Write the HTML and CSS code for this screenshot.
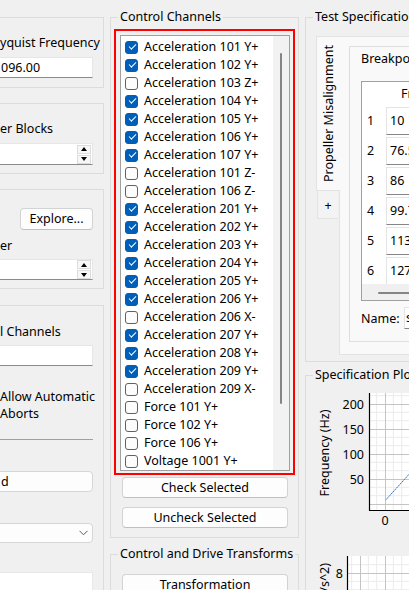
FILE: index.html
```html
<!DOCTYPE html>
<html>
<head>
<meta charset="utf-8">
<link rel="stylesheet" href="styles.css">
</head>
<body>
<div class="app">
  <div class="col-left">
    <div class="lgroup g1">
      <div class="lbl">yquist Frequency</div>
      <div class="edit">096.00</div>
    </div>
    <div class="lgroup g2">
      <div class="lbl">er Blocks</div>
      <div class="spin h22"><span class="spin-val"></span><span class="spin-btns"><span class="sb"><span class="tri-up"></span></span><span class="sb"><span class="tri-dn"></span></span></span></div>
    </div>
    <div class="lgroup g3">
      <button class="btn explore">Explore...</button>
      <div class="lbl lbl-er">er</div>
      <div class="spin h21"><span class="spin-val"></span><span class="spin-btns"><span class="sb"><span class="tri-up"></span></span><span class="sb"><span class="tri-dn"></span></span></span></div>
    </div>
    <div class="lgroup g4">
      <div class="lbl">l Channels</div>
      <div class="edit edit-ch"></div>
      <div class="chk-text">Allow Automatic<br>Aborts</div>
      <div class="sep"></div>
      <div class="field">d</div>
      <div class="combo"><svg class="chev" width="9" height="6" viewBox="0 0 9 6"><polyline points="0.5,0.8 4.5,4.8 8.5,0.8" fill="none" stroke="#5c5c5c" stroke-width="1"/></svg></div>
      <div class="whitebox"></div>
    </div>
  </div>

  <div class="col-mid">
    <fieldset class="group">
      <legend>Control Channels</legend>
      <div class="gbody cc">
        <div class="hilite">
          <div class="list">
            <div class="items">
              <div class="item"><span class="cb on"></span><span class="itxt">Acceleration 101 Y+</span></div>
              <div class="item"><span class="cb on"></span><span class="itxt">Acceleration 102 Y+</span></div>
              <div class="item"><span class="cb"></span><span class="itxt">Acceleration 103 Z+</span></div>
              <div class="item"><span class="cb on"></span><span class="itxt">Acceleration 104 Y+</span></div>
              <div class="item"><span class="cb on"></span><span class="itxt">Acceleration 105 Y+</span></div>
              <div class="item"><span class="cb on"></span><span class="itxt">Acceleration 106 Y+</span></div>
              <div class="item"><span class="cb on"></span><span class="itxt">Acceleration 107 Y+</span></div>
              <div class="item"><span class="cb"></span><span class="itxt">Acceleration 101 Z-</span></div>
              <div class="item"><span class="cb"></span><span class="itxt">Acceleration 106 Z-</span></div>
              <div class="item"><span class="cb on"></span><span class="itxt">Acceleration 201 Y+</span></div>
              <div class="item"><span class="cb on"></span><span class="itxt">Acceleration 202 Y+</span></div>
              <div class="item"><span class="cb on"></span><span class="itxt">Acceleration 203 Y+</span></div>
              <div class="item"><span class="cb on"></span><span class="itxt">Acceleration 204 Y+</span></div>
              <div class="item"><span class="cb on"></span><span class="itxt">Acceleration 205 Y+</span></div>
              <div class="item"><span class="cb on"></span><span class="itxt">Acceleration 206 Y+</span></div>
              <div class="item"><span class="cb"></span><span class="itxt">Acceleration 206 X-</span></div>
              <div class="item"><span class="cb on"></span><span class="itxt">Acceleration 207 Y+</span></div>
              <div class="item"><span class="cb on"></span><span class="itxt">Acceleration 208 Y+</span></div>
              <div class="item"><span class="cb on"></span><span class="itxt">Acceleration 209 Y+</span></div>
              <div class="item"><span class="cb"></span><span class="itxt">Acceleration 209 X-</span></div>
              <div class="item"><span class="cb"></span><span class="itxt">Force 101 Y+</span></div>
              <div class="item"><span class="cb"></span><span class="itxt">Force 102 Y+</span></div>
              <div class="item"><span class="cb"></span><span class="itxt">Force 106 Y+</span></div>
              <div class="item"><span class="cb"></span><span class="itxt">Voltage 1001 Y+</span></div>
            </div>
            <div class="vscroll"><div class="vthumb"></div></div>
          </div>
        </div>
        <button class="btn wide first">Check Selected</button>
        <button class="btn wide second">Uncheck Selected</button>
      </div>
    </fieldset>
    <fieldset class="group cdt">
      <legend>Control and Drive Transforms</legend>
      <div class="gbody cdt-body">
        <button class="btn wide">Transformation</button>
      </div>
    </fieldset>
  </div>

  <div class="col-right">
    <fieldset class="group">
      <legend>Test Specification</legend>
      <div class="gbody ts">
        <div class="tabw">
          <div class="tabbar">
            <div class="tab sel"><span class="vtext">Propeller Misalignment</span></div>
            <div class="tab add">+</div>
          </div>
          <div class="pane">
            <div class="frame">
              <div class="flabel">Breakpoints</div>
              <div class="table">
                <div class="thead"><div class="corner"></div><div class="hcell">Frequency (Hz)</div></div>
                <div class="tbody">
                  <div class="trow"><div class="vh">1</div><div class="cell">10</div></div>
                  <div class="trow"><div class="vh">2</div><div class="cell">76.5</div></div>
                  <div class="trow"><div class="vh">3</div><div class="cell">86</div></div>
                  <div class="trow"><div class="vh">4</div><div class="cell">99.7</div></div>
                  <div class="trow"><div class="vh">5</div><div class="cell">113</div></div>
                  <div class="trow"><div class="vh">6</div><div class="cell">127</div></div>
                </div>
                <div class="hscroll"><div class="hthumb"></div></div>
              </div>
              <div class="namerow"><span class="nlabel">Name:</span><span class="nedit">sample</span></div>
            </div>
          </div>
        </div>
      </div>
    </fieldset>
    <fieldset class="group sp">
      <legend>Specification Plot</legend>
      <svg class="plot" width="110" height="210" viewBox="0 0 110 210">
        <rect x="63" y="9" width="47" height="117" fill="#ffffff"/>
        <g stroke="#ebebeb" stroke-width="1">
          <line x1="63" y1="11.67" x2="110" y2="11.67"/>
          <line x1="63" y1="28.33" x2="110" y2="28.33"/>
          <line x1="63" y1="36.67" x2="110" y2="36.67"/>
          <line x1="63" y1="53.33" x2="110" y2="53.33"/>
          <line x1="63" y1="61.67" x2="110" y2="61.67"/>
          <line x1="63" y1="78.33" x2="110" y2="78.33"/>
          <line x1="63" y1="86.67" x2="110" y2="86.67"/>
          <line x1="63" y1="103.33" x2="110" y2="103.33"/>
          <line x1="63" y1="111.67" x2="110" y2="111.67"/>
          <line x1="70.67" y1="9" x2="70.67" y2="126"/>
          <line x1="87.33" y1="9" x2="87.33" y2="126"/>
          <line x1="95.67" y1="9" x2="95.67" y2="126"/>
        </g>
        <g stroke="#c4c4c4" stroke-width="1">
          <line x1="63" y1="20.5" x2="110" y2="20.5"/>
          <line x1="63" y1="45.5" x2="110" y2="45.5"/>
          <line x1="63" y1="70.5" x2="110" y2="70.5"/>
          <line x1="63" y1="95.5" x2="110" y2="95.5"/>
          <line x1="63" y1="120.5" x2="110" y2="120.5"/>
          <line x1="79.5" y1="9" x2="79.5" y2="126"/>
          <line x1="104.5" y1="9" x2="104.5" y2="126"/>
        </g>
        <polyline points="80,115.7 103,90.3 110,82.6" fill="none" stroke="#2f6fd0" stroke-width="1" stroke-dasharray="2 0.6"/>
        <g stroke="#000" stroke-width="1.2">
          <line x1="63.5" y1="9" x2="63.5" y2="126.5"/>
          <line x1="63" y1="126.5" x2="110" y2="126.5"/>
        </g>
        <g class="tick" text-anchor="end">
          <text x="58" y="20" dominant-baseline="central">200</text>
          <text x="58" y="45" dominant-baseline="central">150</text>
          <text x="58" y="70" dominant-baseline="central">100</text>
          <text x="58" y="95" dominant-baseline="central">50</text>
        </g>
        <text class="tick" x="79" y="136" text-anchor="middle" dominant-baseline="central">0</text>
        <text class="axlabel" transform="translate(18,69) rotate(-90)" text-anchor="middle" dominant-baseline="central">Frequency (Hz)</text>

        <rect x="41" y="172" width="69" height="40" fill="#ffffff"/>
        <g stroke="#ebebeb" stroke-width="1">
          <line x1="41" y1="180.67" x2="110" y2="180.67"/>
          <line x1="41" y1="197.33" x2="110" y2="197.33"/>
          <line x1="41" y1="205.67" x2="110" y2="205.67"/>
          <line x1="45.67" y1="172" x2="45.67" y2="210"/>
          <line x1="62.33" y1="172" x2="62.33" y2="210"/>
          <line x1="70.67" y1="172" x2="70.67" y2="210"/>
          <line x1="87.33" y1="172" x2="87.33" y2="210"/>
          <line x1="95.67" y1="172" x2="95.67" y2="210"/>
        </g>
        <g stroke="#c4c4c4" stroke-width="1">
          <line x1="41" y1="189.5" x2="110" y2="189.5"/>
          <line x1="54.5" y1="172" x2="54.5" y2="210"/>
          <line x1="79.5" y1="172" x2="79.5" y2="210"/>
          <line x1="104.5" y1="172" x2="104.5" y2="210"/>
        </g>
        <line x1="41.5" y1="172" x2="41.5" y2="210" stroke="#000" stroke-width="1.2"/>
        <text class="tick" x="37" y="189" text-anchor="end" dominant-baseline="central">8</text>
        <text class="axlabel" transform="translate(18,179) rotate(-90)" text-anchor="end" dominant-baseline="central">Acceleration (m/s^2)</text>
      </svg>
    </fieldset>
  </div>
</div>
</body>
</html>
```

FILE: styles.css
```css
* { box-sizing: border-box; }
html, body { margin: 0; padding: 0; }
body {
  width: 409px;
  height: 590px;
  overflow: hidden;
  background: #f0f0f0;
  font-family: "Noto Sans", "Open Sans", sans-serif;
  font-size: 12.5px;
  color: #000;
}
.app { display: flex; align-items: flex-start; }

/* ---------- left column ---------- */
.col-left {
  flex: 0 0 121px;
  width: 121px;
  margin-left: -17px;
  padding-top: 17px;
}
.lgroup {
  border: 1px solid #dcdcdc;
  display: flex;
  flex-direction: column;
  padding: 0 10px 0 12px;
  margin-top: 15px;
}
.lgroup > * { flex-shrink: 0; }
.g1 { margin-top: 0; padding-top: 16px; padding-bottom: 9px; }
.g2 { padding-top: 16px; padding-bottom: 8px; }
.g3 { padding-top: 18px; padding-bottom: 8px; }
.g4 { margin-top: 16px; padding-top: 17px; height: 330px; }
.lbl { line-height: 18px; height: 18px; padding-left: 4px; white-space: nowrap; }
.lbl-er { margin-top: 7px; }
.edit {
  margin-top: 5px;
  height: 21px;
  background: #fff;
  border: 1px solid #e6e6e6;
  border-bottom-color: #8a8a8a;
  padding-left: 4px;
  line-height: 19px;
}
.edit-ch { margin-top: 4px; }
.spin {
  display: flex;
  background: #fff;
  border: 1px solid #e6e6e6;
  border-bottom-color: #8a8a8a;
}
.spin.h22 { margin-top: 5px; height: 22px; }
.spin.h21 { margin-top: 4px; height: 21px; }
.spin-val { flex: 1; }
.spin-btns { display: flex; flex-direction: column; justify-content: center; gap: 1px; padding-right: 1px; }
.sb {
  width: 14px;
  height: 9px;
  border: 1px solid #dcdcdc;
  background: #f7f7f7;
  display: flex;
  align-items: center;
  justify-content: center;
}
.tri-up { width: 0; height: 0; border-left: 3px solid transparent; border-right: 3px solid transparent; border-bottom: 4px solid #000; }
.tri-dn { width: 0; height: 0; border-left: 3px solid transparent; border-right: 3px solid transparent; border-top: 4px solid #000; }
.btn {
  font: inherit;
  color: #000;
  background: #fdfdfd;
  border: 1px solid #d3d3d3;
  border-bottom-color: #c0c0c0;
  border-radius: 4px;
  padding: 0;
  margin: 0;
  display: block;
  text-align: center;
}
.explore { align-self: flex-end; width: 73px; height: 22px; line-height: 20px; }
.chk-text { margin-top: 22px; line-height: 17px; padding-left: 4px; white-space: nowrap; }
.sep { margin-top: 17px; height: 1px; background: #a0a0a0; }
.field {
  margin-top: 31px;
  height: 21px;
  background: #fdfdfd;
  border: 1px solid #d6d6d6;
  border-radius: 4px;
  padding-left: 4px;
  line-height: 19px;
}
.combo {
  margin-top: 31px;
  height: 20px;
  background: #fdfdfd;
  border: 1px solid #d6d6d6;
  border-radius: 4px;
  display: flex;
  align-items: center;
  justify-content: flex-end;
  padding-right: 4px;
}
.chev { display: block; }
.whitebox { margin-top: 29px; height: 60px; background: #fff; border: 1px solid #e8e8e8; }

/* ---------- group boxes ---------- */
fieldset.group {
  margin: 0;
  padding: 0;
  min-width: 0;
  border: 1px solid #dcdcdc;
}
fieldset.group legend {
  padding: 0 2px;
  margin-left: 7px;
  line-height: 18px;
  height: 18px;
  white-space: nowrap;
}

/* ---------- middle column ---------- */
.col-mid {
  flex: 0 0 189px;
  width: 189px;
  margin-left: 6px;
  padding-top: 8px;
}
.gbody.cc { padding: 3px 3px 9px 3px; }
.hilite {
  border: 2px solid #ff0000;
  padding: 4px 3px 2px 4px;
}
.list {
  display: flex;
  border: 1px solid #a0a0a0;
  background: #fff;
}
.items { flex: 1; padding-top: 2px; background: #fff; }
.item { display: flex; align-items: center; height: 18px; }
.cb {
  flex: 0 0 13px;
  width: 13px;
  height: 13px;
  margin-left: 4px;
  border: 1px solid #616161;
  border-radius: 3px;
  background: #fcfcfc;
  position: relative;
}
.cb.on { background: #005fb8; border-color: #005fb8; }
.cb.on::after {
  content: "";
  position: absolute;
  left: 2.8px;
  top: 2.6px;
  width: 5.5px;
  height: 2.8px;
  border-left: 1.1px solid #fff;
  border-bottom: 1.1px solid #fff;
  transform: rotate(-45deg);
}
.itxt { margin-left: 6px; line-height: 18px; white-space: nowrap; }
.vscroll {
  flex: 0 0 16px;
  width: 16px;
  background: #f2f2f2;
  padding-top: 17px;
  display: flex;
  justify-content: center;
}
.vthumb { width: 2px; height: 351px; background: #858585; border-radius: 1px; }
.btn.wide { width: 166px; height: 21px; line-height: 19px; margin-left: 8px; }
.btn.first { margin-top: 2px; }
.btn.second { margin-top: 9px; }
fieldset.cdt { margin-top: 7px; }
.gbody.cdt-body { padding: 11px 3px 20px 3px; }

/* ---------- right column ---------- */
.col-right {
  flex: 0 0 230px;
  width: 230px;
  margin-left: 6px;
  padding-top: 8px;
}
.gbody.ts { padding: 10px 0 6px 10px; }
.tabw { display: flex; align-items: flex-start; }
.tabbar { display: flex; flex-direction: column; width: 23px; flex: 0 0 23px; }
.tab.sel {
  position: relative;
  z-index: 1;
  width: 24px;
  margin-right: -1px;
  height: 155px;
  flex: 0 0 155px;
  background: #f9f9f9;
  border: 1px solid #e3e3e3;
  border-right: none;
  display: flex;
  align-items: center;
  justify-content: center;
}
.vtext {
  writing-mode: vertical-rl;
  transform: rotate(180deg);
  white-space: nowrap;
  line-height: 18px;
}
.tab.add {
  width: 21px;
  height: 28px;
  flex: 0 0 28px;
  margin-left: 1px;
  border: 1px solid #e3e3e3;
  border-top: none;
  border-right: none;
  background: #f3f3f3;
  text-align: center;
  line-height: 29px;
}
.pane {
  flex: 1;
  background: #f9f9f9;
  border: 1px solid #e3e3e3;
  padding: 9px 0 12px 9px;
}
.frame {
  border: 1px solid #dedede;
  border-right: none;
  background: #f9f9f9;
  padding: 3px 0 12px 11px;
}
.flabel { line-height: 18px; height: 18px; white-space: nowrap; }
.table {
  margin-top: 13px;
  width: 200px;
  border: 1px solid #a0a0a0;
  border-right: none;
  background: #fff;
}
.thead { display: flex; height: 24px; }
.corner { width: 24px; flex: 0 0 24px; }
.hcell { flex: 0 0 117px; width: 117px; text-align: center; line-height: 24px; white-space: nowrap; }
.tbody { height: 178px; overflow: hidden; }
.trow { display: flex; height: 30px; }
.vh { flex: 0 0 24px; width: 24px; padding-left: 5px; line-height: 30px; }
.cell {
  flex: 0 0 117px;
  width: 117px;
  height: 28px;
  margin-top: 1px;
  background: #fff;
  border: 1px solid #e4e4e4;
  border-bottom-color: #868686;
  padding-left: 3px;
  line-height: 26px;
  white-space: nowrap;
}
.hscroll { height: 16px; background: #f0f0f0; padding: 8px 0 0 16px; }
.hthumb { height: 2px; width: 120px; background: #858585; border-radius: 1px; }
.namerow { display: flex; align-items: center; margin-top: 6px; height: 22px; }
.nlabel { width: 43px; flex: 0 0 43px; white-space: nowrap; }
.nedit {
  width: 120px;
  height: 22px;
  background: #fff;
  border: 1px solid #e4e4e4;
  border-bottom-color: #868686;
  padding-left: 1px;
  line-height: 20px;
}
fieldset.sp { margin-top: 4px; }
.plot { display: block; }
.plot text { font-family: "Noto Sans", "Open Sans", sans-serif; font-size: 12.5px; fill: #000; }
```
